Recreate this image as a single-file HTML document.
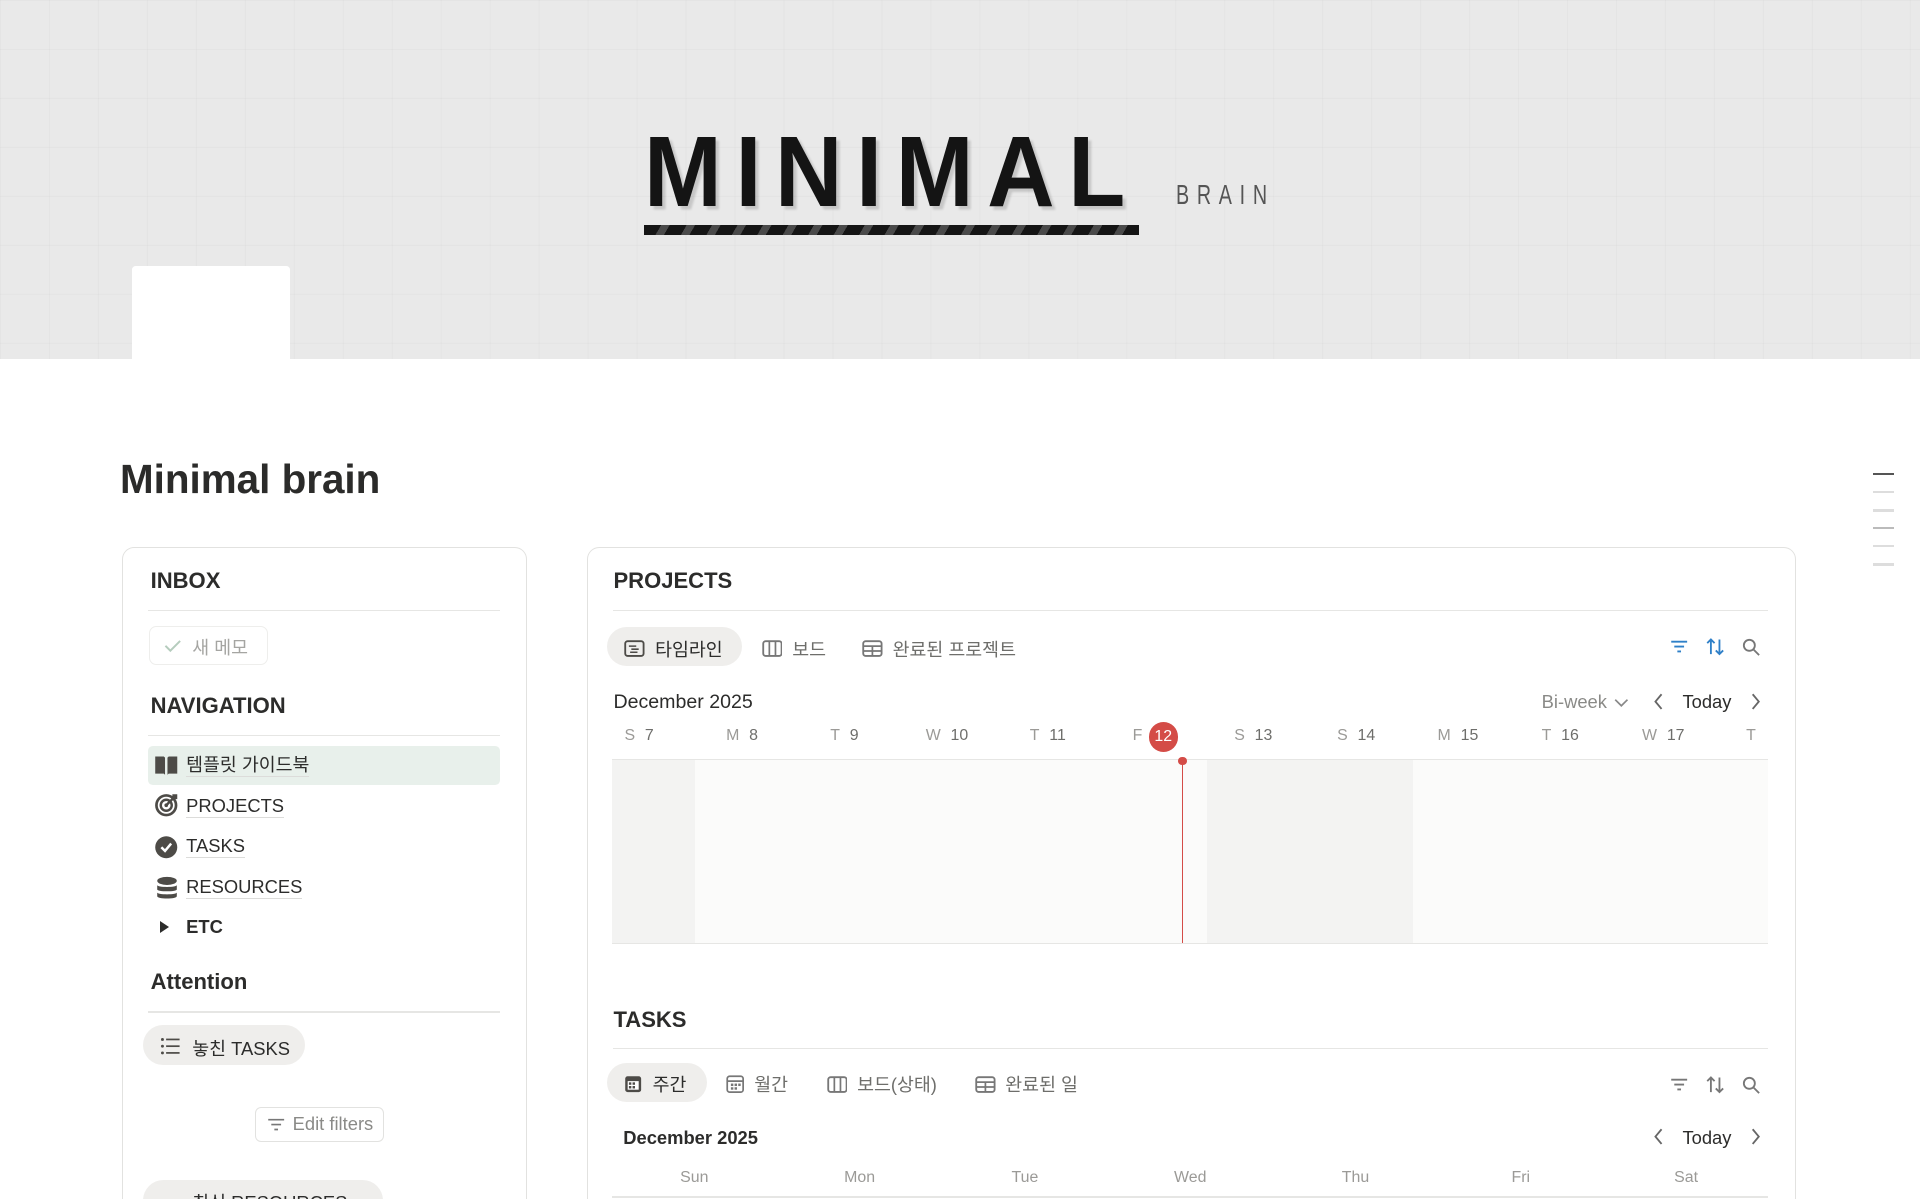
<!DOCTYPE html>
<html><head><meta charset="utf-8"><style>
*{box-sizing:border-box;margin:0;padding:0}
html,body{width:1920px;height:1199px;overflow:hidden;background:#fff}
#w{zoom:1.22449;width:1568px;height:979px;position:relative;font-family:"Liberation Sans","Noto Sans CJK KR",sans-serif;color:#2c2c2b;overflow:hidden}
.a{position:absolute;white-space:nowrap}
.hdr{left:0;top:0;width:1568px;height:293px;background-color:#e9e9e9;
background-image:linear-gradient(90deg,rgba(0,0,0,.025) 1px,transparent 1px),linear-gradient(rgba(0,0,0,.025) 1px,transparent 1px);background-size:40px 40px}
.card{border:1px solid #e2e2e0;border-radius:10px;background:#fff}
.h{font-weight:700;font-size:18px;color:#2c2c2b}
.ln{height:1px;background:#e6e6e4}
.nav{font-size:15px;left:152px;border-bottom:1px solid #dcdcda;line-height:18px}
.gray{color:#8a8a87}
.tab{font-size:15px;color:#6e6e6b;display:flex;align-items:center;gap:8px}
.d{font-size:13px;color:#9b9a97}
.d b{font-weight:400;color:#6e6e6b;margin-left:8px}
.wd{font-size:13px;color:#9b9a97;transform:translateX(-50%)}
</style></head><body><div id="w">
<div class="a hdr"></div>
<div class="a" style="left:526px;top:100px;font-size:82px;line-height:1;font-weight:700;letter-spacing:12px;color:#141414;transform:scaleX(.93);transform-origin:left;text-shadow:3px 3px 2px rgba(0,0,0,.15)">MINIMAL</div>
<div class="a" style="left:526px;top:184px;width:404px;height:8px;background:repeating-linear-gradient(-60deg,#151515 0 12px,#4a4a4a 12px 18px)"></div>
<div class="a" style="left:960px;top:146px;font-size:23px;letter-spacing:9px;color:#555;transform:scaleX(.7);transform-origin:left">BRAIN</div>
<div class="a" style="left:108px;top:217px;width:129px;height:76px;background:#fff;border-radius:3px 3px 0 0"></div>

<div class="a" style="left:98px;top:372px;font-size:33px;font-weight:700;color:#2b2b2a">Minimal brain</div>
<div class="a" style="left:1530px;top:386px;width:17px;height:2px;background:#555"></div>
<div class="a" style="left:1530px;top:401px;width:17px;height:2px;background:#ddd"></div>
<div class="a" style="left:1530px;top:416px;width:17px;height:2px;background:#ddd"></div>
<div class="a" style="left:1530px;top:430px;width:17px;height:2px;background:#bbb"></div>
<div class="a" style="left:1530px;top:445px;width:17px;height:2px;background:#ddd"></div>
<div class="a" style="left:1530px;top:460px;width:17px;height:2px;background:#ddd"></div>

<!-- left card -->
<div class="a card" style="left:100px;top:447px;width:330px;height:560px"></div>
<div class="a h" style="left:123px;top:464px">INBOX</div>
<div class="a ln" style="left:121px;top:498px;width:287px"></div>
<div class="a" style="left:122px;top:511px;width:97px;height:32px;border:1px solid #eeeeec;border-radius:6px"></div>
<svg class="a" style="left:133px;top:519px" width="16" height="16" viewBox="0 0 16 16"><path d="M2 8l4 4 8-8" fill="none" stroke="#b5ccbd" stroke-width="1.6"/></svg>
<div class="a gray" style="left:157px;top:518px;font-size:15px;color:#a5a5a2">새 메모</div>
<div class="a h" style="left:123px;top:566px">NAVIGATION</div>
<div class="a ln" style="left:121px;top:600px;width:287px"></div>
<div class="a" style="left:121px;top:609px;width:287px;height:32px;background:#e8f0eb;border-radius:4px"></div>
<svg class="a" style="left:126px;top:616px" width="20" height="18" viewBox="0 0 20 18"><path d="M1 2h7l1 1v14l-1-1H1z M19 2h-7l-1 1v14l1-1h7z" fill="#4d4b47"/></svg>
<div class="a nav" style="top:616px">템플릿 가이드북</div>
<svg class="a" style="left:126px;top:648px" width="20" height="20" viewBox="0 0 20 20"><circle cx="10" cy="10" r="8" fill="none" stroke="#4d4b47" stroke-width="2.2"/><circle cx="10" cy="10" r="4.5" fill="none" stroke="#4d4b47" stroke-width="2"/><circle cx="10" cy="10" r="1.5" fill="#4d4b47"/><path d="M10 10L17 3M15 2l3 0 0 3" stroke="#4d4b47" stroke-width="2" fill="none"/></svg>
<div class="a nav" style="top:649px">PROJECTS</div>
<svg class="a" style="left:126px;top:682px" width="20" height="20" viewBox="0 0 20 20"><circle cx="10" cy="10" r="9" fill="#4d4b47"/><path d="M6 10l3 3 5-6" stroke="#fff" stroke-width="2" fill="none"/></svg>
<div class="a nav" style="top:682px">TASKS</div>
<svg class="a" style="left:127px;top:715px" width="18" height="20" viewBox="0 0 18 20"><ellipse cx="9" cy="4" rx="8" ry="3.3" fill="#4d4b47"/><path d="M1 7.5c0 2 16 2 16 0v3.5c0 2-16 2-16 0zM1 13.5c0 2 16 2 16 0v3c0 2.5-16 2.5-16 0z" fill="#4d4b47"/></svg>
<div class="a nav" style="top:715px">RESOURCES</div>
<div class="a" style="left:131px;top:752px;width:0;height:0;border-left:8px solid #2c2c2b;border-top:5px solid transparent;border-bottom:5px solid transparent"></div>
<div class="a" style="left:152px;top:748px;font-size:15px;font-weight:700">ETC</div>
<div class="a h" style="left:123px;top:791px">Attention</div>
<div class="a ln" style="left:121px;top:826px;width:287px"></div>
<div class="a" style="left:117px;top:837px;width:132px;height:33px;background:#efeeec;border-radius:17px"></div>
<svg class="a" style="left:131px;top:847px" width="17" height="15" viewBox="0 0 17 15"><g fill="#4d4b47"><circle cx="2" cy="2" r="1.2"/><circle cx="2" cy="7.5" r="1.2"/><circle cx="2" cy="13" r="1.2"/><rect x="5" y="1.3" width="11" height="1.4"/><rect x="5" y="6.8" width="11" height="1.4"/><rect x="5" y="12.3" width="11" height="1.4"/></g></svg>
<div class="a" style="left:157px;top:845px;font-size:15px">놓친 TASKS</div>
<div class="a" style="left:208px;top:904px;width:106px;height:29px;border:1px solid #e2e2e0;border-radius:5px"></div>
<svg class="a" style="left:218px;top:911px" width="15" height="14" viewBox="0 0 15 14"><path d="M1 3h13M3.5 7h8M6 11h3" stroke="#777" stroke-width="1.4"/></svg>
<div class="a gray" style="left:239px;top:909px;font-size:15px">Edit filters</div>
<div class="a" style="left:117px;top:964px;width:196px;height:33px;background:#efeeec;border-radius:17px"></div>
<div class="a" style="left:157px;top:971px;font-size:15px">최신 RESOURCES</div>

<!-- right card -->
<div class="a card" style="left:479px;top:447px;width:988px;height:560px"></div>
<div class="a h" style="left:501px;top:464px">PROJECTS</div>
<div class="a ln" style="left:501px;top:498px;width:943px"></div>
<div class="a" style="left:496px;top:512px;width:110px;height:32px;background:#efeeec;border-radius:16px"></div>
<div class="a tab" style="left:510px;top:519px;color:#2c2c2b"><svg width="17" height="14" viewBox="0 0 17 14"><rect x="1" y="1" width="15" height="12" rx="2" fill="none" stroke="#4d4b47" stroke-width="1.5"/><path d="M4 5h6M6 7.5h6M5 10h6" stroke="#4d4b47" stroke-width="1.3"/></svg>타임라인</div>
<div class="a tab" style="left:622px;top:519px"><svg width="17" height="14" viewBox="0 0 17 14"><rect x="1" y="1" width="15" height="12" rx="2" fill="none" stroke="#777" stroke-width="1.5"/><path d="M6 1v12M11 1v12" stroke="#777" stroke-width="1.4"/></svg>보드</div>
<div class="a tab" style="left:704px;top:519px"><svg width="17" height="14" viewBox="0 0 17 14"><rect x="1" y="1" width="15" height="12" rx="2" fill="none" stroke="#777" stroke-width="1.5"/><path d="M1 5h15M1 9h15M8.5 5v8" stroke="#777" stroke-width="1.4"/></svg>완료된 프로젝트</div>
<svg class="a" style="left:1364px;top:521px" width="15" height="14" viewBox="0 0 15 14"><path d="M1 3h13M3.5 7h8M6 11h3" stroke="#2f80c8" stroke-width="1.5"/></svg>
<svg class="a" style="left:1393px;top:520px" width="15" height="16" viewBox="0 0 15 16"><path d="M4 14V2M1 5l3-3 3 3M11 2v12M8 11l3 3 3-3" stroke="#2f80c8" stroke-width="1.5" fill="none"/></svg>
<svg class="a" style="left:1423px;top:521px" width="15" height="15" viewBox="0 0 15 15"><circle cx="6" cy="6" r="4.5" fill="none" stroke="#777" stroke-width="1.5"/><path d="M9.5 9.5L14 14" stroke="#777" stroke-width="1.5"/></svg>
<div class="a" style="left:501px;top:564px;font-size:16px">December 2025</div>
<div class="a gray" style="left:1259px;top:564px;font-size:15px">Bi-week</div>
<svg class="a" style="left:1318px;top:568px" width="12" height="10" viewBox="0 0 12 10"><path d="M1 3l5 5 5-5" stroke="#888" stroke-width="1.4" fill="none"/></svg>
<svg class="a" style="left:1350px;top:566px" width="10" height="14" viewBox="0 0 10 14"><path d="M7 1L2 7l5 6" stroke="#666" stroke-width="1.5" fill="none"/></svg>
<div class="a" style="left:1374px;top:564px;font-size:15px">Today</div>
<svg class="a" style="left:1428px;top:566px" width="10" height="14" viewBox="0 0 10 14"><path d="M3 1l5 6-5 6" stroke="#666" stroke-width="1.5" fill="none"/></svg>
<div class="a d" style="left:510px;top:594px">S<b>7</b></div>
<div class="a d" style="left:593px;top:594px">M<b>8</b></div>
<div class="a d" style="left:678px;top:594px">T<b>9</b></div>
<div class="a d" style="left:756px;top:594px">W<b>10</b></div>
<div class="a d" style="left:841px;top:594px">T<b>11</b></div>
<div class="a d" style="left:925px;top:594px">F</div>
<div class="a" style="left:938px;top:590px;width:24px;height:24px;border-radius:12px;background:#d44c47;color:#fff;font-size:13px;text-align:center;line-height:24px">12</div>
<div class="a d" style="left:1008px;top:594px">S<b>13</b></div>
<div class="a d" style="left:1092px;top:594px">S<b>14</b></div>
<div class="a d" style="left:1174px;top:594px">M<b>15</b></div>
<div class="a d" style="left:1259px;top:594px">T<b>16</b></div>
<div class="a d" style="left:1341px;top:594px">W<b>17</b></div>
<div class="a d" style="left:1426px;top:594px">T</div>
<div class="a ln" style="left:500px;top:620px;width:944px"></div>
<div class="a" style="left:500px;top:621px;width:944px;height:149px;background:#fbfbfa"></div>
<div class="a" style="left:500px;top:621px;width:68px;height:149px;background:#f3f3f2"></div>
<div class="a" style="left:986px;top:621px;width:168px;height:149px;background:#f3f3f2"></div>
<div class="a ln" style="left:500px;top:770px;width:944px"></div>
<div class="a" style="left:965px;top:621px;width:1px;height:149px;background:#d44c47"></div>
<div class="a" style="left:962px;top:618px;width:7px;height:7px;border-radius:4px;background:#d44c47"></div>

<div class="a h" style="left:501px;top:822px">TASKS</div>
<div class="a ln" style="left:501px;top:856px;width:943px"></div>
<div class="a" style="left:496px;top:868px;width:81px;height:32px;background:#efeeec;border-radius:16px"></div>
<div class="a tab" style="left:510px;top:875px;color:#2c2c2b"><svg width="15" height="15" viewBox="0 0 15 15"><rect x="1" y="1" width="13" height="13" rx="2" fill="#4d4b47"/><rect x="3" y="5" width="9" height="7" fill="#fff"/><g fill="#4d4b47"><rect x="4" y="6" width="2" height="2"/><rect x="7" y="6" width="2" height="2"/><rect x="4" y="9" width="2" height="2"/><rect x="7" y="9" width="2" height="2"/></g></svg>주간</div>
<div class="a tab" style="left:593px;top:875px"><svg width="15" height="15" viewBox="0 0 15 15"><rect x="1" y="1" width="13" height="13" rx="2" fill="none" stroke="#777" stroke-width="1.4"/><path d="M1 5h13" stroke="#777" stroke-width="1.4"/><g fill="#777"><rect x="4" y="7" width="2" height="2"/><rect x="7" y="7" width="2" height="2"/><rect x="10" y="7" width="2" height="2"/><rect x="4" y="10" width="2" height="2"/><rect x="7" y="10" width="2" height="2"/></g></svg>월간</div>
<div class="a tab" style="left:675px;top:875px"><svg width="17" height="14" viewBox="0 0 17 14"><rect x="1" y="1" width="15" height="12" rx="2" fill="none" stroke="#777" stroke-width="1.5"/><path d="M6 1v12M11 1v12" stroke="#777" stroke-width="1.4"/></svg>보드(상태)</div>
<div class="a tab" style="left:796px;top:875px"><svg width="17" height="14" viewBox="0 0 17 14"><rect x="1" y="1" width="15" height="12" rx="2" fill="none" stroke="#777" stroke-width="1.5"/><path d="M1 5h15M1 9h15M8.5 5v8" stroke="#777" stroke-width="1.4"/></svg>완료된 일</div>
<svg class="a" style="left:1364px;top:879px" width="15" height="14" viewBox="0 0 15 14"><path d="M1 3h13M3.5 7h8M6 11h3" stroke="#777" stroke-width="1.5"/></svg>
<svg class="a" style="left:1393px;top:878px" width="15" height="16" viewBox="0 0 15 16"><path d="M4 14V2M1 5l3-3 3 3M11 2v12M8 11l3 3 3-3" stroke="#777" stroke-width="1.5" fill="none"/></svg>
<svg class="a" style="left:1423px;top:879px" width="15" height="15" viewBox="0 0 15 15"><circle cx="6" cy="6" r="4.5" fill="none" stroke="#777" stroke-width="1.5"/><path d="M9.5 9.5L14 14" stroke="#777" stroke-width="1.5"/></svg>
<div class="a" style="left:509px;top:920px;font-size:15px;font-weight:700">December 2025</div>
<svg class="a" style="left:1350px;top:921px" width="10" height="14" viewBox="0 0 10 14"><path d="M7 1L2 7l5 6" stroke="#666" stroke-width="1.5" fill="none"/></svg>
<div class="a" style="left:1374px;top:920px;font-size:15px">Today</div>
<svg class="a" style="left:1428px;top:921px" width="10" height="14" viewBox="0 0 10 14"><path d="M3 1l5 6-5 6" stroke="#666" stroke-width="1.5" fill="none"/></svg>
<div class="a wd" style="left:567px;top:955px">Sun</div>
<div class="a wd" style="left:702px;top:955px">Mon</div>
<div class="a wd" style="left:837px;top:955px">Tue</div>
<div class="a wd" style="left:972px;top:955px">Wed</div>
<div class="a wd" style="left:1107px;top:955px">Thu</div>
<div class="a wd" style="left:1242px;top:955px">Fri</div>
<div class="a wd" style="left:1377px;top:955px">Sat</div>
<div class="a ln" style="left:500px;top:977px;width:944px"></div>
</div></body></html>
